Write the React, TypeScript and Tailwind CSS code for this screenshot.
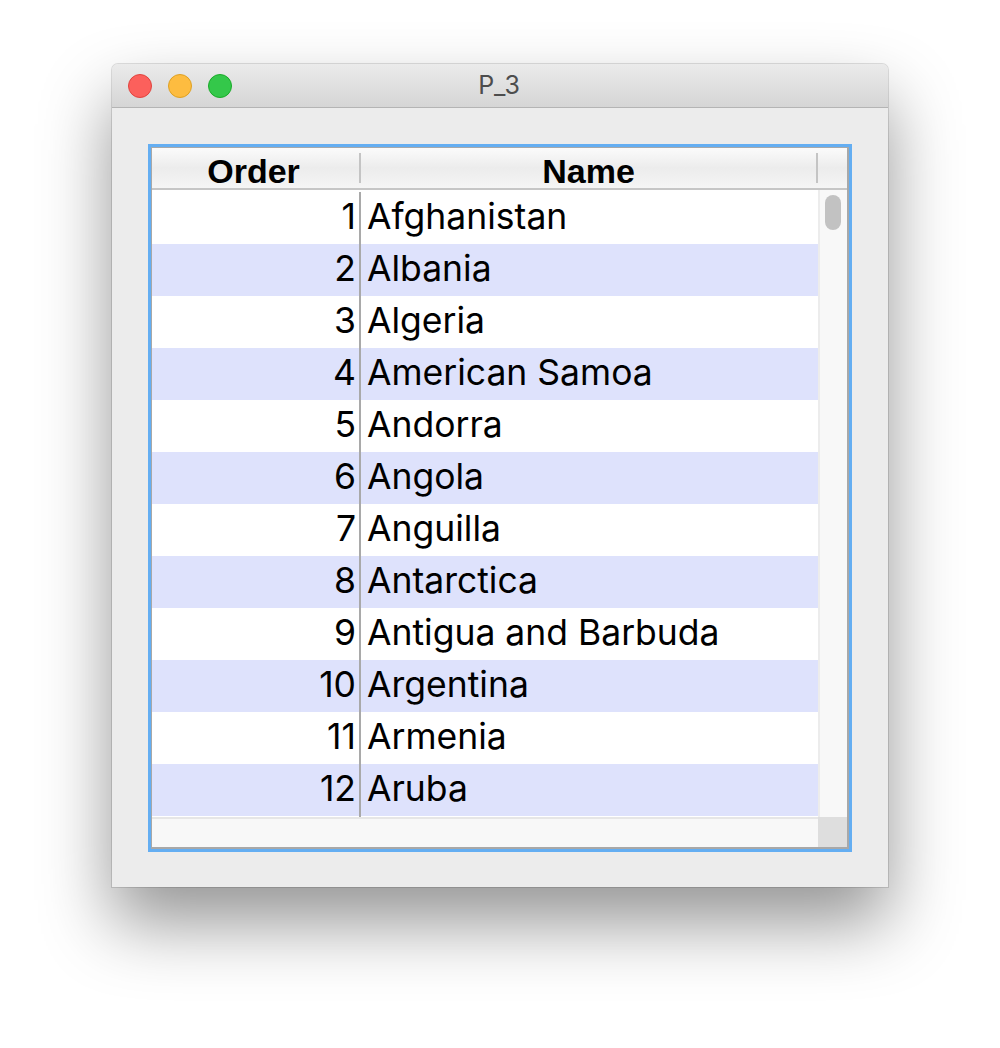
import React from "react";

const countries = [
  "Afghanistan",
  "Albania",
  "Algeria",
  "American Samoa",
  "Andorra",
  "Angola",
  "Anguilla",
  "Antarctica",
  "Antigua and Barbuda",
  "Argentina",
  "Armenia",
  "Aruba",
];

export default function App() {
  return (
    <div className="w-[1000px] h-[1048px] bg-white pt-[64px] pl-[112px]">
      <div className="w-[776px] h-[823px] flex flex-col rounded-t-[6px] bg-[#ececec] shadow-[0_36px_70px_rgba(0,0,0,0.42),0_0_0_1px_rgba(0,0,0,0.12)]">
        {/* Title bar */}
        <div className="relative h-[44px] flex items-center rounded-t-[6px] border-b border-[#b4b4b4] bg-gradient-to-b from-[#ebebeb] to-[#d5d5d5] pl-[16px] gap-[16px]">
          <div className="w-[24px] h-[24px] rounded-full bg-[#fc605c] border border-[#e0443e]" />
          <div className="w-[24px] h-[24px] rounded-full bg-[#fdbc40] border border-[#dea123]" />
          <div className="w-[24px] h-[24px] rounded-full bg-[#34c84a] border border-[#1aab29]" />
          <div className="absolute inset-0 flex items-center justify-center text-[25px] text-[#4d4d4d] font-['Inter',sans-serif] pointer-events-none">
            <span className="ml-[-2px] mt-[1px]">P_3</span>
          </div>
        </div>
        {/* Content */}
        <div className="flex-1 pt-[36px] pl-[36px]">
          <div className="w-[704px] h-[708px] border-[3px] border-[#64aef2] bg-[#a8a8a8] pl-[1px] pt-[1px] pr-[2px] pb-[2px]">
            <div className="w-full h-full flex flex-col bg-white">
              {/* Header */}
              <div className="h-[42px] flex border-b-2 border-[#c6c6c6] bg-gradient-to-b from-[#fbfbfb] via-[#ececec] to-[#f5f5f5] font-['Liberation_Sans',Arial,sans-serif] font-bold text-[34px] text-black">
                <div className="w-[207px] flex justify-center pt-[5px] leading-[37px] pr-[4px]">
                  Order
                </div>
                <div className="w-[2px] mt-[5px] h-[30px] bg-[#c4c4c4]" />
                <div className="w-[455px] flex justify-center pt-[5px] leading-[37px]">
                  Name
                </div>
                <div className="w-[2px] mt-[5px] h-[30px] bg-[#c4c4c4]" />
                <div className="flex-1" />
              </div>
              {/* Body */}
              <div className="flex-1 flex flex-col">
                <div className="flex-1 flex">
                  <div className="w-[666px] flex flex-col pt-[2px] font-['Inter',sans-serif] text-[35.5px] text-black">
                    {countries.map((c, i) => (
                      <div
                        key={c}
                        className={
                          "h-[52px] flex leading-[49px] " +
                          (i % 2 === 1 ? "bg-[#dee2fc]" : "bg-white")
                        }
                      >
                        <div className="w-[207px] text-right pr-[3px]">{i + 1}</div>
                        <div className="w-[2px] bg-[#a9a9a9]" />
                        <div className="flex-1 pl-[6px]">{c}</div>
                      </div>
                    ))}
                    <div className="w-[2px] flex-1 bg-[#a9a9a9] ml-[207px]" />
                  </div>
                  {/* vertical scrollbar */}
                  <div className="flex-1 border-l-2 border-[#ececec] bg-[#f8f8f8] pl-[5px] pt-[5px]">
                    <div className="w-[16px] h-[35px] rounded-full bg-[#c2c2c2]" />
                  </div>
                </div>
                {/* horizontal scrollbar */}
                <div className="h-[30px] flex">
                  <div className="w-[666px] border-t-2 border-[#e6e6e6] bg-[#f8f8f8]" />
                  <div className="flex-1 bg-[#dedede]" />
                </div>
              </div>
            </div>
          </div>
        </div>
      </div>
    </div>
  );
}
